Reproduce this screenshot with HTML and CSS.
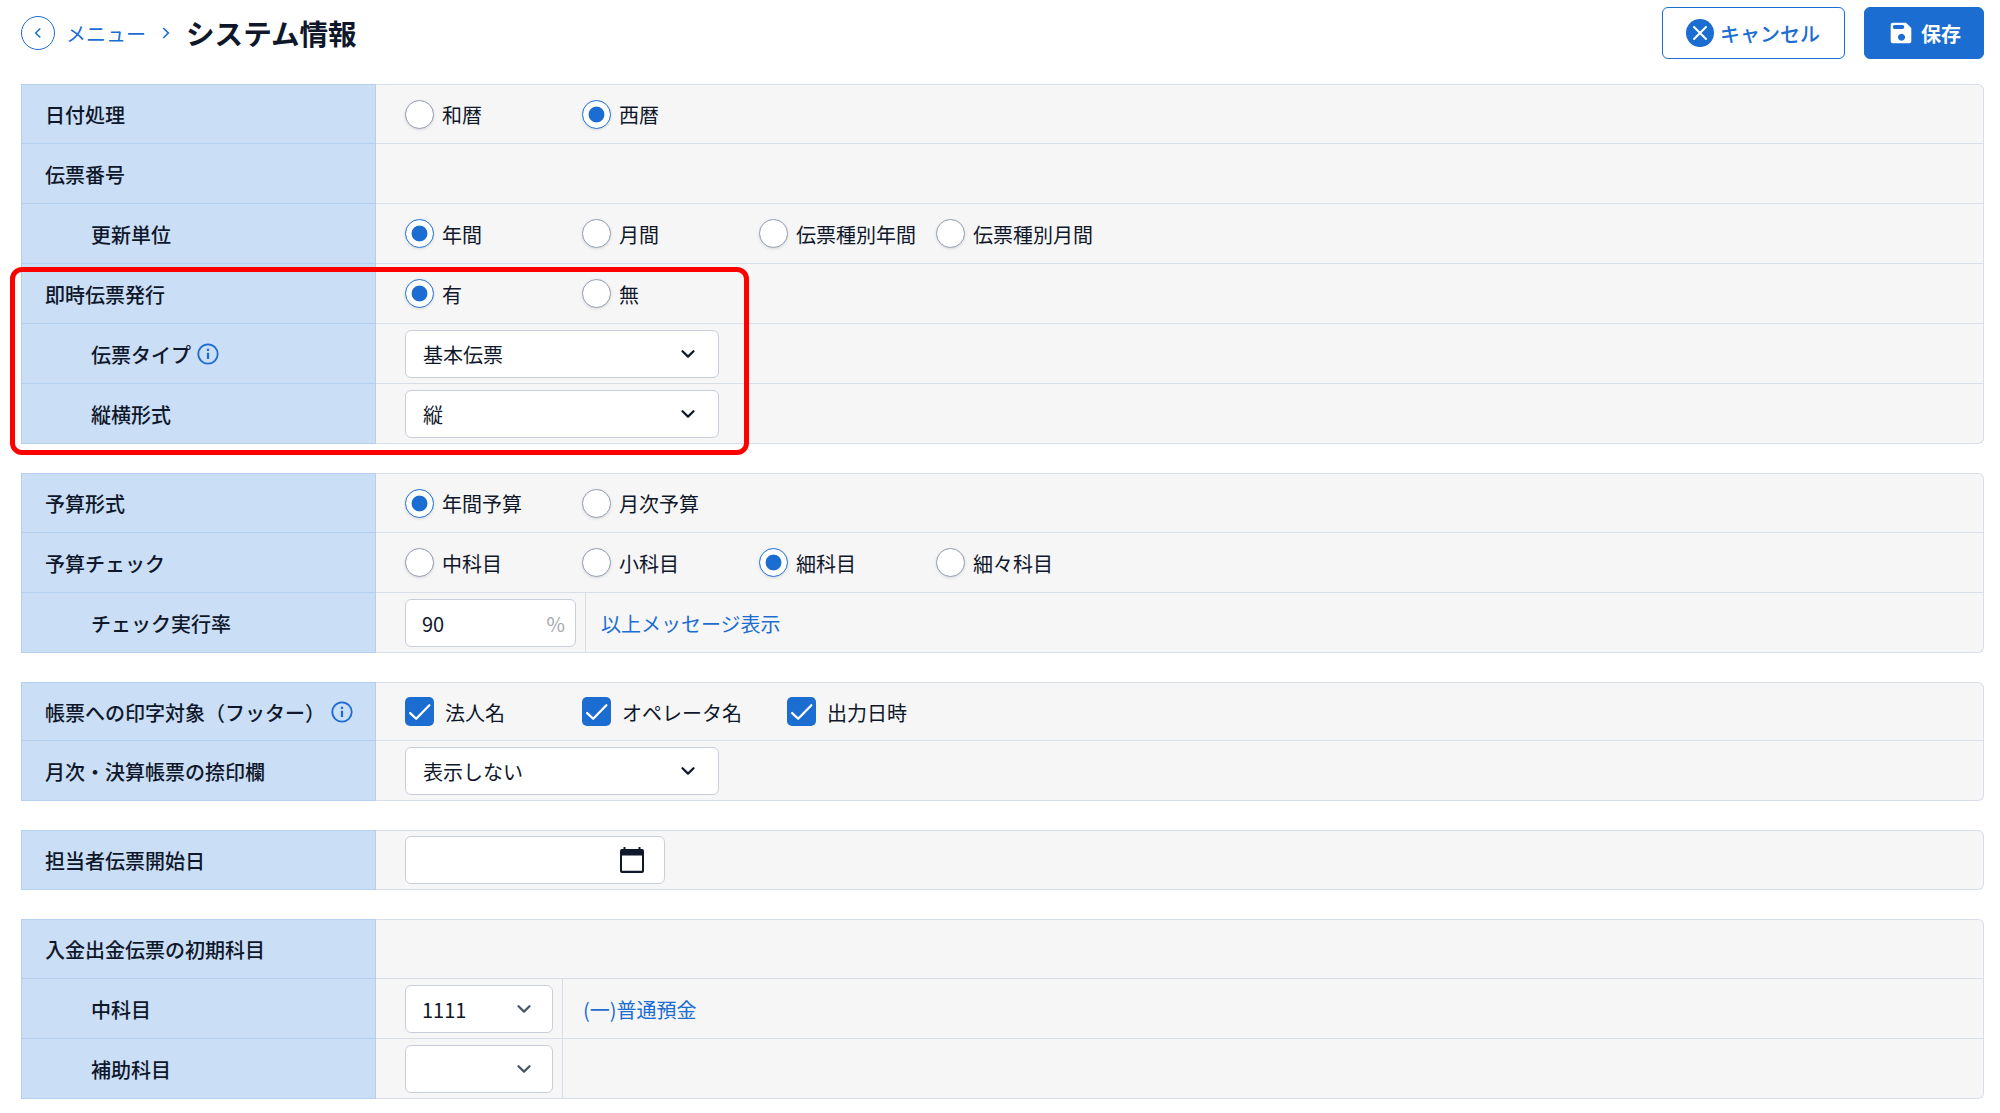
FILE: index.html
```html
<!DOCTYPE html>
<html lang="ja">
<head>
<meta charset="utf-8">
<title>システム情報</title>
<link rel="stylesheet" href="styles.css">
</head>
<body>
<svg class="defs" width="0" height="0" aria-hidden="true">
  <symbol id="chevron" viewBox="0 0 14 8"><path d="M1.5 1.2 7 6.6l5.500-5.400" fill="none" stroke="currentColor" stroke-width="2.200" stroke-linecap="round" stroke-linejoin="round"/></symbol>
  <symbol id="info" viewBox="0 0 22 22"><circle cx="11" cy="11" r="9.700" fill="none" stroke="currentColor" stroke-width="1.800"/><path d="M9.900 5.700h2.200v2.200H9.900zM9.900 9.800h2.200v6.200H9.900z" fill="currentColor"/></symbol>
  <symbol id="tick" viewBox="0 0 28 28"><path d="M5 15.500 10.800 21 23.500 8" fill="none" stroke="#fff" stroke-width="2.200" stroke-linecap="round" stroke-linejoin="round"/></symbol>
</svg>

<header class="header">
  <a class="back"><svg width="8" height="12" viewBox="0 0 8 12"><path d="M6.300 1.500 1.700 6l4.600 4.500" fill="none" stroke="currentColor" stroke-width="1.500"/></svg></a>
  <a class="crumb">メニュー</a>
  <svg class="crumb-sep" width="8" height="12" viewBox="0 0 8 12"><path d="M1.300 1 6.300 6l-5 5" fill="none" stroke="currentColor" stroke-width="1.700"/></svg>
  <h1 class="title">システム情報</h1>
  <div class="actions">
    <button class="btn btn-cancel"><svg width="28" height="28" viewBox="0 0 28 28"><circle cx="14" cy="14" r="14" fill="currentColor"/><path d="m8 8 12 12M20 8 8 20" stroke="#fff" stroke-width="2" stroke-linecap="round"/></svg><span>キャンセル</span></button>
    <button class="btn btn-save"><svg width="22" height="22" viewBox="0 0 22 22"><path fill="#fff" fill-rule="evenodd" d="M2 .7h14L21.300 6v13.300q0 2-2 2H2.700q-2 0-2-2V2.700q0-2 2-2zM4.800 3A2 2 0 0 0 4.800 7h7.500a2 2 0 0 0 0-4zM11.500 11.800a3.500 3.500 0 1 0 .01 0z"/></svg><span>保存</span></button>
  </div>
</header>

<main class="main">
  <section class="group">
    <div class="row row-first"><div class="label">日付処理</div><div class="field">
      <label class="radio"><i></i>和暦</label><label class="radio on"><i></i>西暦</label></div></div>
    <div class="row"><div class="label">伝票番号</div><div class="field"></div></div>
    <div class="row"><div class="label sub">更新単位</div><div class="field">
      <label class="radio on"><i></i>年間</label><label class="radio"><i></i>月間</label><label class="radio"><i></i>伝票種別年間</label><label class="radio"><i></i>伝票種別月間</label></div></div>
    <div class="row"><div class="label">即時伝票発行</div><div class="field">
      <label class="radio on"><i></i>有</label><label class="radio"><i></i>無</label></div></div>
    <div class="row"><div class="label sub">伝票タイプ<svg class="info"><use href="#info"/></svg></div><div class="field">
      <div class="select"><span>基本伝票</span><svg class="chev"><use href="#chevron"/></svg></div></div></div>
    <div class="row"><div class="label sub">縦横形式</div><div class="field">
      <div class="select"><span>縦</span><svg class="chev"><use href="#chevron"/></svg></div></div></div>
    <div class="highlight"></div>
  </section>

  <section class="group">
    <div class="row row-first"><div class="label">予算形式</div><div class="field">
      <label class="radio on"><i></i>年間予算</label><label class="radio"><i></i>月次予算</label></div></div>
    <div class="row"><div class="label">予算チェック</div><div class="field">
      <label class="radio"><i></i>中科目</label><label class="radio"><i></i>小科目</label><label class="radio on"><i></i>細科目</label><label class="radio"><i></i>細々科目</label></div></div>
    <div class="row"><div class="label sub">チェック実行率</div><div class="field">
      <div class="select percent"><span>90</span><span class="unit">%</span></div><div class="note note-percent">以上メッセージ表示</div></div></div>
  </section>

  <section class="group">
    <div class="row row-short"><div class="label">帳票への印字対象（フッター）<svg class="info info-far"><use href="#info"/></svg></div><div class="field">
      <label class="check"><svg><use href="#tick"/></svg>法人名</label><label class="check"><svg><use href="#tick"/></svg>オペレータ名</label><label class="check"><svg><use href="#tick"/></svg>出力日時</label></div></div>
    <div class="row"><div class="label">月次・決算帳票の捺印欄</div><div class="field">
      <div class="select"><span>表示しない</span><svg class="chev"><use href="#chevron"/></svg></div></div></div>
  </section>

  <section class="group">
    <div class="row row-first"><div class="label">担当者伝票開始日</div><div class="field">
      <div class="select date"><svg width="24" height="26" viewBox="0 0 24 26"><path fill="currentColor" fill-rule="evenodd" d="M3.500 0h2v2h13V0h2v2H22q2 0 2 2v20q0 2-2 2H2q-2 0-2-2V4q0-2 2-2h1.500zM2 8.500v15.300h20V8.500z"/></svg></div></div></div>
  </section>

  <section class="group">
    <div class="row row-first"><div class="label">入金出金伝票の初期科目</div><div class="field"></div></div>
    <div class="row"><div class="label sub">中科目</div><div class="field">
      <div class="select combo"><span>1111</span><svg class="chev"><use href="#chevron"/></svg></div><div class="note note-account">(一)普通預金</div></div></div>
    <div class="row"><div class="label sub">補助科目</div><div class="field">
      <div class="select combo"><span></span><svg class="chev"><use href="#chevron"/></svg></div><div class="note note-account"></div></div></div>
  </section>
</main>
</body>
</html>
```

FILE: styles.css
```css
* { box-sizing: border-box; }
body {
  margin: 0;
  background: #fff;
  color: #0f172a;
  font-family: "Noto Sans CJK JP", sans-serif;
  font-size: 20px;
  line-height: 28px;
}
.defs { display: none; }
svg { display: block; flex: none; }

.header {
  display: flex;
  align-items: center;
  height: 84px;
  padding: 0 16px 18px 21px;
}
.back {
  display: flex;
  align-items: center;
  justify-content: center;
  width: 34px;
  height: 34px;
  border: 1.5px solid #1b6dd1;
  border-radius: 50%;
  color: #1b6dd1;
}
.crumb { margin-left: 11px; color: #1b6dd1; padding-top: 2px; }
.crumb-sep { margin-left: 16px; color: #1b6dd1; }
.title { margin: 0 0 0 16px; font-size: 28.600px; font-weight: 700; line-height: 40px; }
.actions { display: flex; gap: 19px; margin-left: auto; }
.btn {
  display: flex;
  align-items: center;
  height: 52px;
  border: 1.500px solid #1b6dd1;
  border-radius: 6px;
  font: 500 20px/28px "Noto Sans CJK JP", sans-serif;
}
.btn span { padding-top: 2px; }
.btn-cancel { width: 183px; padding: 0 0 0 23px; gap: 6px; background: #fff; color: #1b6dd1; }
.btn-save { width: 120px; padding: 0 0 0 25px; gap: 9px; background: #1b6dd1; color: #fff; font-weight: 700; }

.main { display: flex; flex-direction: column; gap: 29px; padding: 0 16px 0 21px; }
.group {
  position: relative;
  display: flex;
  flex-direction: column;
}
.row { display: flex; height: 60px; }
.row-first { height: 60px; }
.row-short { height: 59px; }
.label {
  display: flex;
  align-items: center;
  width: 355px;
  padding: 2px 0 0 23px;
  background: #cadef6;
  border: 1px solid #b4cff0;
  border-top: 0;
  font-weight: 500;
}
.sub { padding-left: 69px; }
.row:first-child .label { border-top: 1px solid #b4cff0; }
.field {
  display: flex;
  align-items: center;
  flex: 1;
  padding-left: 29px;
  background: #f6f6f6;
  border: 1px solid #d8dee7;
  border-width: 0 1px 1px 0;
}
.row:first-child .field { border-top-width: 1px; border-top-right-radius: 6px; }
.row:nth-last-child(1 of .row) .field { border-bottom-right-radius: 6px; }
.info { width: 22px; height: 22px; margin: -2px 0 0 6px; color: #1b6dd1; }
.info-far { margin-left: 6px; }

.radio { display: flex; align-items: center; gap: 8px; width: 177px; padding-top: 2px; white-space: nowrap; }
.radio i {
  flex: none;
  width: 29px;
  height: 29px;
  margin-top: -2px;
  border: 1.500px solid #929daf;
  border-radius: 50%;
  background: #fff;
  box-shadow: 0 1px 3px rgba(15, 23, 42, .12);
}
.radio.on i { border-color: #1b6dd1; background: radial-gradient(circle, #1b6dd1 7.500px, #fff 8.300px); }

.check { display: flex; align-items: center; gap: 11px; padding-top: 2px; white-space: nowrap; }
.check:first-child { width: 177px; }
.check:nth-child(2) { width: 205px; }
.check svg { width: 29px; height: 29px; margin-top: -2px; border-radius: 5px; background: #1b6dd1; }

.select {
  display: flex;
  align-items: center;
  justify-content: space-between;
  width: 314px;
  height: 48px;
  padding: 0 23px 0 17px;
  background: #fff;
  border: 1px solid #c8cfda;
  border-radius: 6px;
}
.select span { padding-top: 2px; }
.chev { width: 14px; height: 8px; }
.percent { width: 171px; padding: 0 10px 0 16px; }
.percent .unit { color: #a6a9ae; }
.date { width: 260px; padding-right: 20px; justify-content: flex-end; }
.combo { width: 148px; padding: 0 21px 0 16px; }
.combo .chev { color: #475569; }
.note {
  display: flex;
  align-items: center;
  align-self: stretch;
  margin-left: 9px;
  padding-top: 2px;
  border-left: 1px solid #d8dee7;
  color: #1b6dd1;
}
.note-percent { padding-left: 15px; }
.note-account { padding-left: 20px; }

/* Callout frame laid over the slip-issuing rows */
.highlight {
  position: absolute;
  left: -11px;
  top: 183px;
  width: 739px;
  height: 188px;
  border: 5px solid #f00;
  border-radius: 12px;
}
```
